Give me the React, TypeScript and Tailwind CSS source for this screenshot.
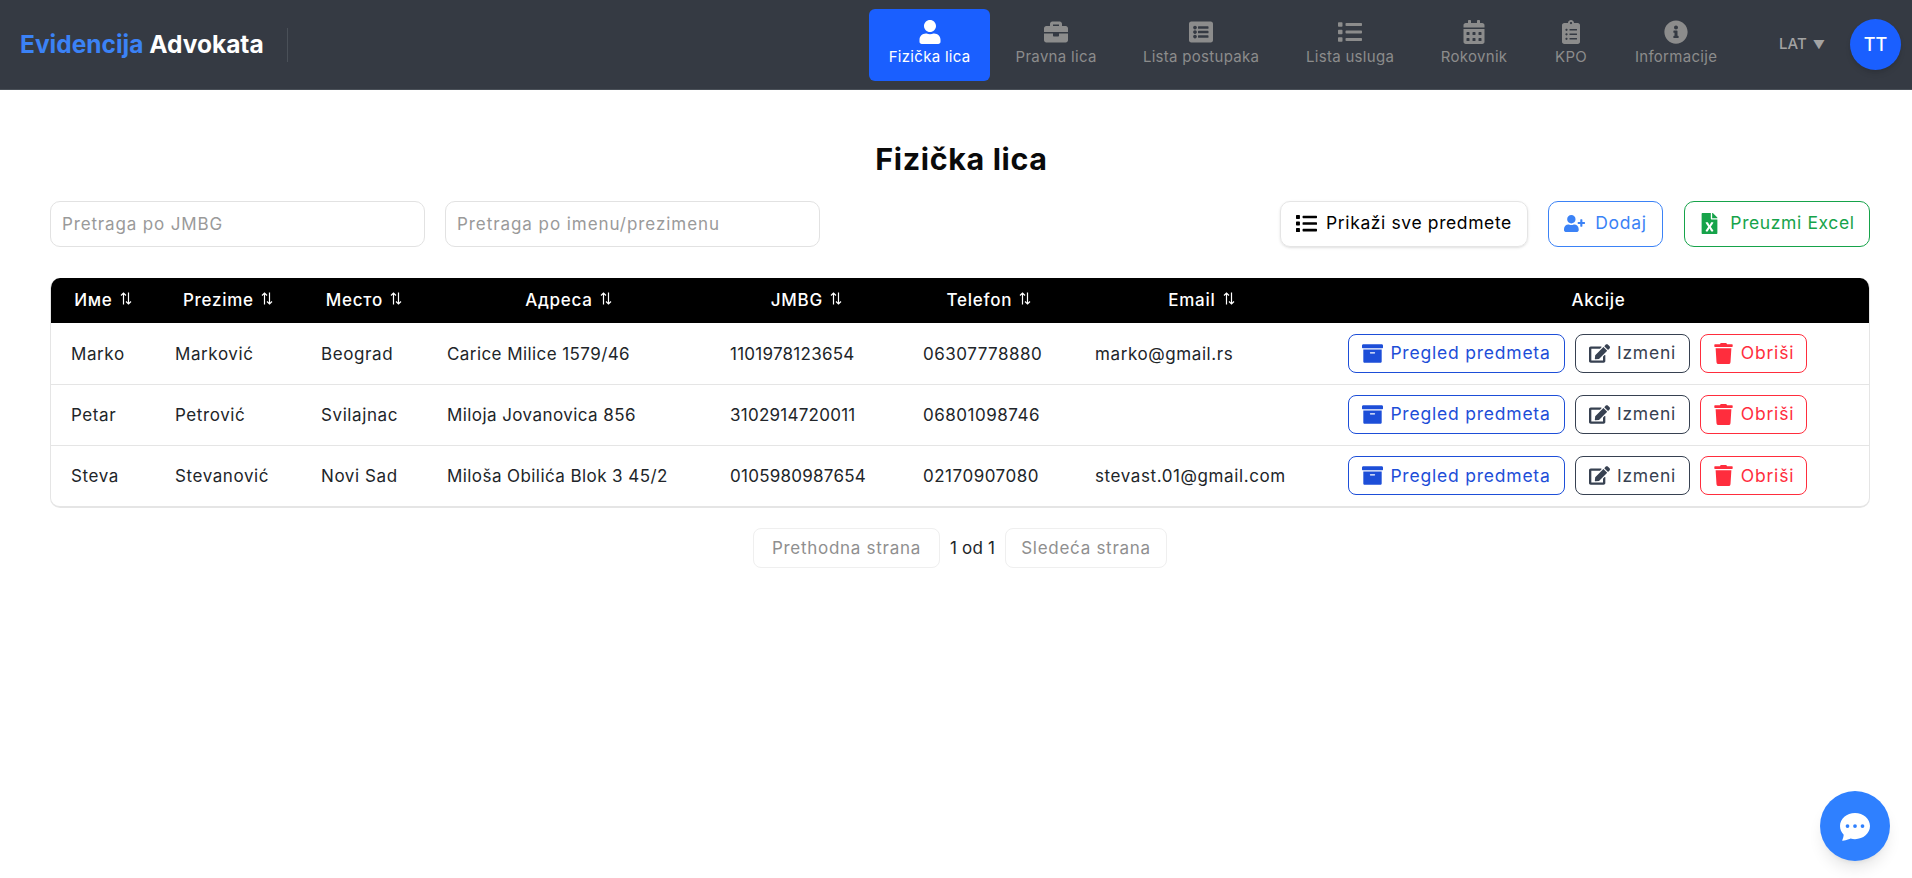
import {
  FaArchive,
  FaBriefcase,
  FaCalendarAlt,
  FaClipboardList,
  FaEdit,
  FaFileExcel,
  FaInfoCircle,
  FaList,
  FaListAlt,
  FaTrash,
  FaUser,
  FaUserPlus,
} from 'react-icons/fa'
import { BsChatDotsFill } from 'react-icons/bs'
import type { IconType } from 'react-icons'

const navItems: { label: string; icon: IconType; width: string; active?: boolean }[] = [
  { label: 'Fizička lica', icon: FaUser, width: 'w-[121px]', active: true },
  { label: 'Pravna lica', icon: FaBriefcase, width: 'w-[132px]' },
  { label: 'Lista postupaka', icon: FaListAlt, width: 'w-[158px]' },
  { label: 'Lista usluga', icon: FaList, width: 'w-[140px]' },
  { label: 'Rokovnik', icon: FaCalendarAlt, width: 'w-[108px]' },
  { label: 'KPO', icon: FaClipboardList, width: 'w-[86px]' },
  { label: 'Informacije', icon: FaInfoCircle, width: 'w-[124px]' },
]

const people = [
  {
    ime: 'Marko',
    prezime: 'Marković',
    mesto: 'Beograd',
    adresa: 'Carice Milice 1579/46',
    jmbg: '1101978123654',
    telefon: '06307778880',
    email: 'marko@gmail.rs',
  },
  {
    ime: 'Petar',
    prezime: 'Petrović',
    mesto: 'Svilajnac',
    adresa: 'Miloja Jovanovica 856',
    jmbg: '3102914720011',
    telefon: '06801098746',
    email: '',
  },
  {
    ime: 'Steva',
    prezime: 'Stevanović',
    mesto: 'Novi Sad',
    adresa: 'Miloša Obilića Blok 3 45/2',
    jmbg: '0105980987654',
    telefon: '02170907080',
    email: 'stevast.01@gmail.com',
  },
]

const columns = ['Име', 'Prezime', 'Место', 'Адреса', 'JMBG', 'Telefon', 'Email']

function SortIcon() {
  return (
    <svg
      viewBox="0 0 12 13"
      className="ml-[2px] inline-block h-[13px] w-[12px] align-[1px]"
      fill="none"
      stroke="currentColor"
      strokeWidth="1.2"
    >
      <path d="M3.5 12.5V1M1 3.5l2.5-2.5L6 3.5" />
      <path d="M8.5 0.5V12M6 9.5l2.5 2.5 2.5-2.5" />
    </svg>
  )
}

function NavItem({ label, icon: Icon, width, active }: (typeof navItems)[number]) {
  return (
    <a
      className={`flex h-[72px] flex-col items-center justify-center gap-[4px] rounded-md pb-[3px] text-[15px] tracking-[0.02em] ${width} ${
        active ? 'bg-[#1a5fff] text-white' : 'text-[#8c8c8c]'
      }`}
    >
      <Icon className="h-6 w-6" />
      <span className="leading-[18px]">{label}</span>
    </a>
  )
}

function ActionButton({
  label,
  icon: Icon,
  width,
  tone,
}: {
  label: string
  icon: IconType
  width: string
  tone: string
}) {
  return (
    <button
      className={`flex h-[39px] items-center justify-center gap-[7px] rounded-lg border text-[17.5px] tracking-[0.045em] ${width} ${tone}`}
    >
      <Icon className="h-[21px] w-[21px] shrink-0" />
      {label}
    </button>
  )
}

export default function App() {
  return (
    <div className="min-h-[878px] bg-white font-['Inter','Liberation_Sans',sans-serif] tracking-[0.045em] text-[#212529]">
      <header className="flex h-[90px] items-center border-b border-[#4a5058] bg-[#353a43] pl-5 pr-[11px]">
        <div className="flex h-[34px] w-[268px] items-center border-r border-[#4a5058]">
          <span className="text-[24.5px] font-bold tracking-normal text-[#3b82f6]">
            Evidencija <span className="text-white">Advokata</span>
          </span>
        </div>
        <nav className="ml-auto flex items-center">
          {navItems.map((item) => (
            <NavItem key={item.label} {...item} />
          ))}
        </nav>
        <span className="ml-[41px] flex items-center gap-[6px] text-[15px] font-medium tracking-normal text-[#a3a3a3]">
          LAT <span className="text-[12px]">▼</span>
        </span>
        <div className="ml-[25px] flex h-[51px] w-[51px] items-center justify-center rounded-full bg-[#1a5fff] text-[18px] font-medium tracking-normal text-white shadow-md">
          TT
        </div>
      </header>

      <main className="pl-[50px] pr-[42px] pt-[49px]">
        <h1 className="flex h-[40px] items-center justify-center pl-[3px] text-[30.5px] font-bold tracking-[0.02em] text-[#0a0a0a]">
          Fizička lica
        </h1>

        <div className="mt-[22px] flex h-[45px] items-center">
          <input
            placeholder="Pretraga po JMBG"
            className="h-[46px] w-[375px] rounded-[10px] border border-[#e2e2e2] px-[11px] text-[17px] tracking-[0.05em] placeholder:text-[#9a9a9a]"
          />
          <input
            placeholder="Pretraga po imenu/prezimenu"
            className="ml-[20px] h-[46px] w-[375px] rounded-[10px] border border-[#e2e2e2] px-[11px] text-[17px] tracking-[0.055em] placeholder:text-[#9a9a9a]"
          />
          <button className="ml-auto flex h-[46px] w-[248px] items-center justify-center gap-[9px] rounded-[10px] border border-[#e5e5e5] text-[17.5px] tracking-[0.035em] text-black shadow-sm">
            <FaList className="h-[21px] w-[21px]" />
            Prikaži sve predmete
          </button>
          <button className="ml-[20px] flex h-[46px] w-[115px] items-center justify-center gap-[10px] rounded-[10px] border border-[#3b82f6] text-[17.5px] text-[#3b82f6]">
            <FaUserPlus className="h-[21px] w-[21px]" />
            Dodaj
          </button>
          <button className="ml-[21px] flex h-[46px] w-[186px] items-center justify-center gap-[10px] rounded-[10px] border border-[#16a34a] text-[17.5px] tracking-[0.035em] text-[#16a34a]">
            <FaFileExcel className="h-[21px] w-[21px]" />
            Preuzmi Excel
          </button>
        </div>

        <div className="mt-[32px] overflow-hidden rounded-[10px] border-b-2 border-l border-r border-[#e5e5e5]">
          <table className="w-full table-fixed border-collapse">
            <colgroup>
              <col className="w-[104px]" />
              <col className="w-[146px]" />
              <col className="w-[126px]" />
              <col className="w-[283px]" />
              <col className="w-[193px]" />
              <col className="w-[172px]" />
              <col className="w-[253px]" />
              <col />
            </colgroup>
            <thead>
              <tr className="h-[45px] bg-black text-white">
                {columns.map((column) => (
                  <th key={column} className="text-center text-[17px] font-medium">
                    {column} <SortIcon />
                  </th>
                ))}
                <th className="text-center text-[17px] font-medium">Akcije</th>
              </tr>
            </thead>
            <tbody>
              {people.map((person) => (
                <tr
                  key={person.jmbg}
                  className="h-[61px] border-b border-[#e5e5e5] text-[17px] tracking-[0.035em] last:border-b-0"
                >
                  <td className="px-5 pt-[2px]">{person.ime}</td>
                  <td className="px-5 pt-[2px]">{person.prezime}</td>
                  <td className="px-5 pt-[2px]">{person.mesto}</td>
                  <td className="px-5 pt-[2px] tracking-[0.025em]">{person.adresa}</td>
                  <td className="px-5 pt-[2px] tracking-[0.015em]">{person.jmbg}</td>
                  <td className="px-5 pt-[2px] tracking-[0.03em]">{person.telefon}</td>
                  <td className="px-5 pt-[2px]">{person.email}</td>
                  <td className="px-5">
                    <div className="flex gap-[10px]">
                      <ActionButton
                        label="Pregled predmeta"
                        icon={FaArchive}
                        width="w-[217px]"
                        tone="border-[#1d4ed8] text-[#1d4ed8]"
                      />
                      <ActionButton
                        label="Izmeni"
                        icon={FaEdit}
                        width="w-[115px]"
                        tone="border-[#374151] text-[#374151]"
                      />
                      <ActionButton
                        label="Obriši"
                        icon={FaTrash}
                        width="w-[107px]"
                        tone="border-[#ff2d3d] text-[#ff2d3d]"
                      />
                    </div>
                  </td>
                </tr>
              ))}
            </tbody>
          </table>
        </div>

        <div className="mt-[20px] flex items-center justify-center gap-[10px] text-[17px]">
          <button className="h-[40px] w-[187px] rounded-lg border border-[#efefef] pt-[1px] text-[#8f8f8f]">
            Prethodna strana
          </button>
          <span className="pt-[1px] tracking-[0.01em]">1 od 1</span>
          <button className="h-[40px] w-[162px] rounded-lg border border-[#efefef] pt-[1px] text-[#8f8f8f]">
            Sledeća strana
          </button>
        </div>
      </main>

      <button className="fixed bottom-[17px] right-[22px] flex h-[70px] w-[70px] items-center justify-center rounded-full bg-[#2f80ff] text-white shadow-lg">
        <BsChatDotsFill className="h-[30px] w-[30px]" />
      </button>
    </div>
  )
}
